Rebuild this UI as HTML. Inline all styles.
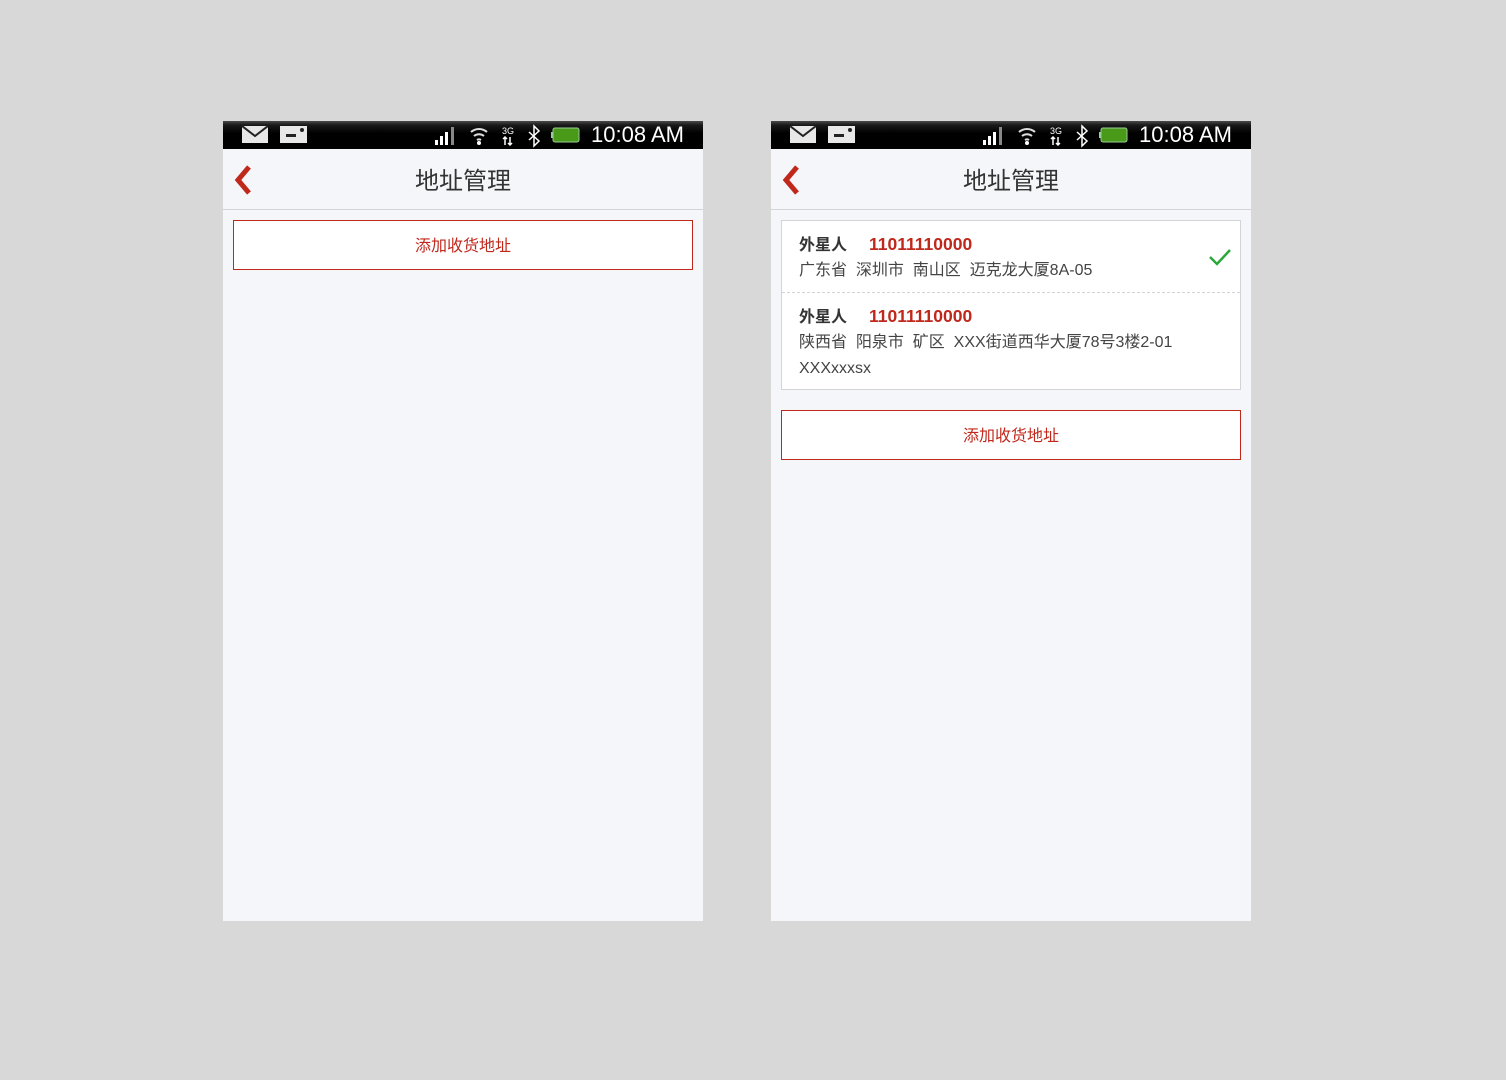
<!DOCTYPE html>
<html><head><meta charset="utf-8"><style>
*{margin:0;padding:0;box-sizing:border-box}
body{width:1506px;height:1080px;background:#d8d8d8;position:relative;font-family:"Liberation Sans","Noto Sans CJK SC",sans-serif;overflow:hidden}
.ph{position:absolute;top:121px;width:480px;height:800px;background:#f5f6fa}
.sb{position:absolute;left:0;top:0;width:480px;height:28px;background:linear-gradient(#4a4a4a 0,#1a1a1a 4px,#000 12px,#000)}
.time{position:absolute;right:19px;top:1px;color:#fff;font-size:22px;line-height:26px}
.hd{position:absolute;left:0;top:28px;width:480px;height:61px;border-bottom:1px solid #d4d4d8}
.hd .t{position:absolute;left:0;right:0;top:18px;text-align:center;font-size:24px;color:#333;line-height:30px}
.btn{position:absolute;left:10px;width:460px;height:50px;border:1px solid #c0281c;background:#fff;color:#c0281c;text-align:center;font-size:16px;line-height:52px}
.card{position:absolute;left:10px;top:99px;width:460px;height:170px;border:1px solid #d4d4d8;background:#fff}
.it{position:absolute;left:17px;font-size:16px;color:#444;line-height:26px}
.it b{font-weight:bold;color:#333;display:inline-block;width:70px}
.it i{font-style:normal;font-weight:bold;color:#c0281c;font-size:17.5px}
</style></head><body>

<div class="ph" style="left:223px">
 <div class="sb">
  <svg width="480" height="28" style="position:absolute;left:0;top:0">
   <rect x="19" y="5" width="26" height="17" fill="#e8e8e8"/><path d="M19 5 L32 15 L45 5" stroke="#222" stroke-width="2" fill="none"/>
   <rect x="57" y="5" width="27" height="17" fill="#e8e8e8"/><rect x="63" y="13" width="10" height="3" fill="#222"/><circle cx="79" cy="9" r="2" fill="#222"/>
   <rect x="212" y="19" width="3" height="5" fill="#fff"/><rect x="217" y="15" width="3" height="9" fill="#fff"/><rect x="222" y="11" width="3" height="13" fill="#fff"/><rect x="228" y="6" width="3" height="18" fill="#888"/>
   <path d="M248 11 A12 12 0 0 1 264 11 M251 15 A8 8 0 0 1 261 15 M254 19 A4 4 0 0 1 258 19" stroke="#ddd" stroke-width="2" fill="none"/><circle cx="256" cy="22" r="2" fill="#fff"/>
   <text x="279" y="13" fill="#fff" font-size="9" font-family="Liberation Sans">3G</text><path d="M282 16v8M280 18l2-2 2 2M287 16v8M285 22l2 2 2-2" stroke="#fff" stroke-width="1.5" fill="none"/>
   <path d="M306 11 L316 20 L311 25 L311 5 L316 10 L306 19" stroke="#fff" stroke-width="1.5" fill="none"/>
   <rect x="330" y="7" width="26" height="14" rx="2" fill="#4a9a1a" stroke="#9c9" stroke-width="1"/><rect x="328" y="11" width="2" height="6" fill="#9c9"/>
  </svg>
  <div class="time">10:08 AM</div>
 </div>
 <div class="hd"><svg width="30" height="40" style="position:absolute;left:8px;top:15px"><path d="M18 3 L7 16 L18 29" stroke="#c0281c" stroke-width="5" fill="none"/></svg><div class="t">地址管理</div></div>
 <div class="btn" style="top:99px">添加收货地址</div>
</div>

<div class="ph" style="left:771px">
 <div class="sb">
  <svg width="480" height="28" style="position:absolute;left:0;top:0">
   <rect x="19" y="5" width="26" height="17" fill="#e8e8e8"/><path d="M19 5 L32 15 L45 5" stroke="#222" stroke-width="2" fill="none"/>
   <rect x="57" y="5" width="27" height="17" fill="#e8e8e8"/><rect x="63" y="13" width="10" height="3" fill="#222"/><circle cx="79" cy="9" r="2" fill="#222"/>
   <rect x="212" y="19" width="3" height="5" fill="#fff"/><rect x="217" y="15" width="3" height="9" fill="#fff"/><rect x="222" y="11" width="3" height="13" fill="#fff"/><rect x="228" y="6" width="3" height="18" fill="#888"/>
   <path d="M248 11 A12 12 0 0 1 264 11 M251 15 A8 8 0 0 1 261 15 M254 19 A4 4 0 0 1 258 19" stroke="#ddd" stroke-width="2" fill="none"/><circle cx="256" cy="22" r="2" fill="#fff"/>
   <text x="279" y="13" fill="#fff" font-size="9" font-family="Liberation Sans">3G</text><path d="M282 16v8M280 18l2-2 2 2M287 16v8M285 22l2 2 2-2" stroke="#fff" stroke-width="1.5" fill="none"/>
   <path d="M306 11 L316 20 L311 25 L311 5 L316 10 L306 19" stroke="#fff" stroke-width="1.5" fill="none"/>
   <rect x="330" y="7" width="26" height="14" rx="2" fill="#4a9a1a" stroke="#9c9" stroke-width="1"/><rect x="328" y="11" width="2" height="6" fill="#9c9"/>
  </svg>
  <div class="time">10:08 AM</div>
 </div>
 <div class="hd"><svg width="30" height="40" style="position:absolute;left:8px;top:15px"><path d="M18 3 L7 16 L18 29" stroke="#c0281c" stroke-width="5" fill="none"/></svg><div class="t">地址管理</div></div>
 <div class="card">
  <div class="it" style="top:10px"><b>外星人</b><i>11011110000</i></div>
  <div class="it" style="top:37px">广东省&nbsp; 深圳市&nbsp; 南山区&nbsp; 迈克龙大厦8A-05</div>
  <svg width="24" height="20" style="position:absolute;left:426px;top:26px"><path d="M2 10 L9 17 L22 3" stroke="#2aa83a" stroke-width="2.5" fill="none"/></svg>
  <div style="position:absolute;left:0;right:0;top:71px;border-top:1px dashed #d4d4d8"></div>
  <div class="it" style="top:82px"><b>外星人</b><i>11011110000</i></div>
  <div class="it" style="top:109px">陕西省&nbsp; 阳泉市&nbsp; 矿区&nbsp; XXX街道西华大厦78号3楼2-01</div>
  <div class="it" style="top:135px">XXXxxxsx</div>
 </div>
 <div class="btn" style="top:289px">添加收货地址</div>
</div>
</body></html>
